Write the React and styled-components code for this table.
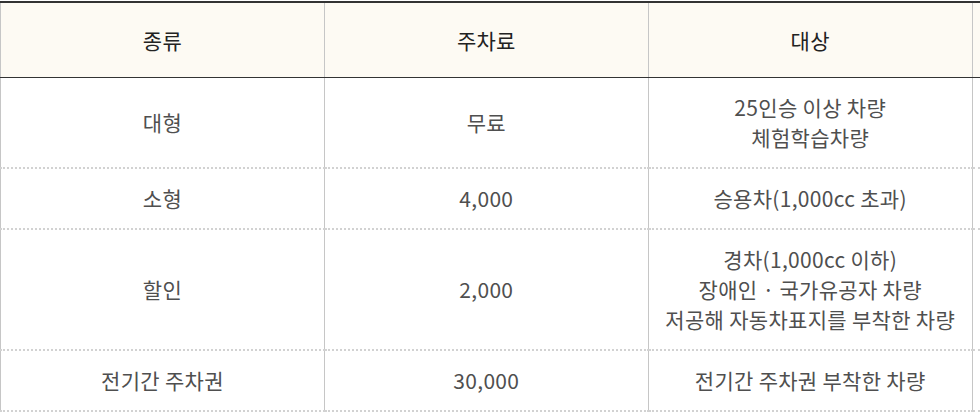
import React from "react";
import styled, { createGlobalStyle } from "styled-components";

const GlobalStyle = createGlobalStyle`
  html, body {
    margin: 0;
    padding: 0;
    background: #fff;
  }
  body {
    font-family: "Noto Sans CJK KR", "Noto Sans", sans-serif;
  }
`;

const Wrapper = styled.div`
  width: 980px;
  overflow: hidden;
  padding-top: 1px;
`;

const Table = styled.table`
  width: 1296px;
  border-collapse: collapse;
  table-layout: fixed;
  border-top: 2px solid #333;
  font-size: 21px;
  letter-spacing: 0.3px;
  text-align: center;
`;

const HeadCell = styled.th`
  height: 74px;
  padding: 0;
  background: #fdfaf3;
  color: #222;
  font-weight: 400;
  border-left: 1px solid #c6c6c6;
  border-bottom: 1px solid #333;
`;

const Cell = styled.td`
  padding: 14px 0 15px;
  line-height: 30px;
  color: #4f4f4f;
  border-left: 1px solid #c6c6c6;
  border-bottom: 2px dotted #d2d2d2;
  vertical-align: middle;
`;

const rows = [
  { kind: "대형", fee: "무료", target: ["25인승 이상 차량", "체험학습차량"] },
  { kind: "소형", fee: "4,000", target: ["승용차(1,000cc 초과)"] },
  {
    kind: "할인",
    fee: "2,000",
    target: ["경차(1,000cc 이하)", "장애인 · 국가유공자 차량", "저공해 자동차표지를 부착한 차량"]
  },
  { kind: "전기간 주차권", fee: "30,000", target: ["전기간 주차권 부착한 차량"] }
];

export default function App() {
  return (
    <Wrapper>
      <GlobalStyle />
      <Table>
        <thead>
          <tr>
            <HeadCell>종류</HeadCell>
            <HeadCell>주차료</HeadCell>
            <HeadCell>대상</HeadCell>
            <HeadCell />
          </tr>
        </thead>
        <tbody>
          {rows.map(row => (
            <tr key={row.kind}>
              <Cell>{row.kind}</Cell>
              <Cell>{row.fee}</Cell>
              <Cell>
                {row.target.map((line, i) => (
                  <div key={i}>{line}</div>
                ))}
              </Cell>
              <Cell />
            </tr>
          ))}
        </tbody>
      </Table>
    </Wrapper>
  );
}
